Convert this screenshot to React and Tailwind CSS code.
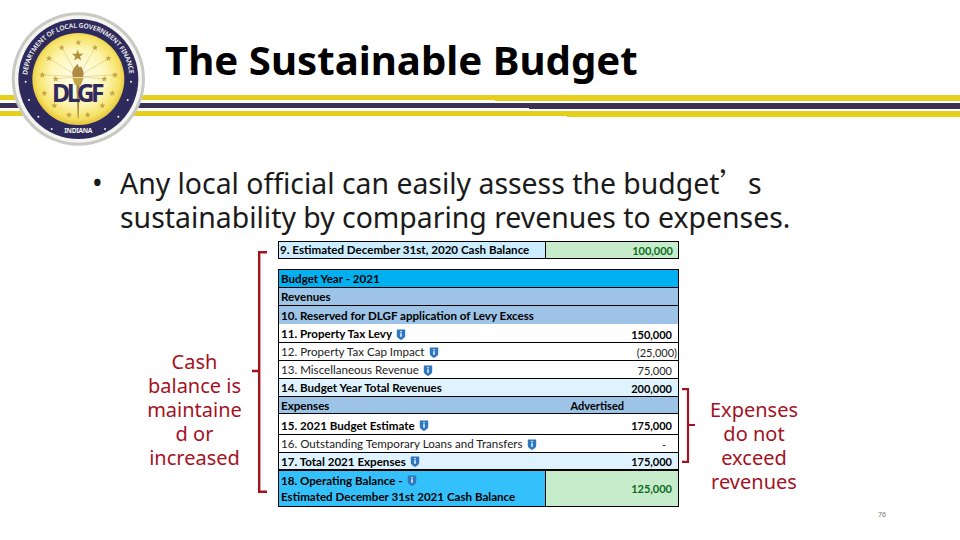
import React from "react";

// five pointed star, centred on cx/cy (seal coordinates)
function Star({ cx, cy, r, fill = "#c4a64a" }) {
  const pts = [];
  for (let i = 0; i < 10; i++) {
    const rad = i % 2 === 0 ? r : r * 0.42;
    const a = (Math.PI / 5) * i - Math.PI / 2;
    pts.push(`${cx + rad * Math.cos(a)},${cy + rad * Math.sin(a)}`);
  }
  return <polygon points={pts.join(" ")} fill={fill} />;
}

const stars = [
  [170, 128], [270, 128], [220, 113], [132, 160], [310, 160], [112, 210], [330, 210],
  [152, 222], [298, 222], [118, 265], [322, 265], [148, 302], [292, 302], [192, 330], [248, 330],
];

const rays = [
  [132, 160], [310, 160], [112, 210], [330, 210], [170, 128], [270, 128], [152, 222], [298, 222],
];

const dots = [
  [62, 230], [72, 285], [100, 335], [140, 372], [300, 372], [340, 335], [368, 285], [378, 230],
];

function Seal() {
  return (
    <svg viewBox="0 0 435 435" className="absolute left-[5px] top-[5px] z-10 h-[145px] w-[145px]">
      <defs>
        <radialGradient id="gold" cx="50%" cy="48%" r="50%">
          <stop offset="0%" stopColor="#fffef4" />
          <stop offset="60%" stopColor="#fdf6b8" />
          <stop offset="90%" stopColor="#f6e264" />
          <stop offset="100%" stopColor="#e8cc48" />
        </radialGradient>
        <path id="sealTop" d="M 66.5 222 A 153.5 153.5 0 0 1 373.5 222" />
      </defs>
      <circle cx="220" cy="222" r="200" fill="#c9c9c4" />
      <circle cx="220" cy="222" r="191" fill="#f4f4f0" />
      <circle cx="220" cy="222" r="180" fill="#2f2a5c" />
      <circle cx="220" cy="222" r="138" fill="url(#gold)" />
      {rays.map(([x, y]) => (
        <line key={`${x}-${y}`} x1="220" y1="215" x2={x} y2={y} stroke="#d6bc62" strokeWidth="1.5" />
      ))}
      {stars.map(([x, y]) => (
        <Star key={`${x}-${y}`} cx={x} cy={y} r={10} />
      ))}
      <Star cx={218} cy={152} r={18} fill="#b0913a" />
      {/* torch */}
      <path d="M218 176 C206 190 198 196 204 216 L234 216 C240 198 230 192 228 182 C226 190 222 188 218 176Z" fill="#b08c40" />
      <path d="M202 218 L236 218 L228 240 L210 240Z" fill="#c4a64a" />
      <path d="M214 240 L224 240 L221 340 L218 340Z" fill="#b08c40" />
      <text x="220" y="290" textAnchor="middle" className="font-['Noto_Sans'] text-[74px] font-bold" fill="#2f2a5c" textLength="158">
        DLGF
      </text>
      <text className="font-['Noto_Sans'] text-[20px] font-semibold" fill="#f4f4f0">
        <textPath href="#sealTop" textLength="455" startOffset="12">
          DEPARTMENT OF LOCAL GOVERNMENT FINANCE
        </textPath>
      </text>
      <text className="font-['Noto_Sans'] text-[20px] font-bold" fill="#f4f4f0" x="220" y="384" textAnchor="middle" textLength="84">
        INDIANA
      </text>
      {dots.map(([x, y]) => (
        <circle key={`${x}-${y}`} cx={x} cy={y} r="3" fill="#f4f4f0" />
      ))}
    </svg>
  );
}

function Stripe({ color, split }) {
  return (
    <div className="flex h-[6px] items-start">
      <div className={`h-[5px] ${split} ${color}`} />
      <div className={`h-[6px] flex-1 ${color}`} />
    </div>
  );
}

function InfoIcon() {
  return (
    <svg viewBox="0 0 9 11" className="ml-[4px] inline-block h-[11px] w-[10px] shrink-0">
      <path d="M0.3 0.6 H8.7 V7 C8.7 9 6 10 4.5 10.9 C3 10 0.3 9 0.3 7Z" fill="#2f78bf" />
      <rect x="3.8" y="2" width="1.4" height="1.4" fill="#ffffff" />
      <rect x="3.8" y="4.2" width="1.4" height="3.6" fill="#ffffff" />
    </svg>
  );
}

function Row({ h, bg = "bg-white", bold, icon, label, value, valueClass = "pr-[6px]", middle, last, textClass = "pt-[1px]" }) {
  return (
    <div className={`flex items-center pl-[2px] ${textClass} ${h} ${bg} ${bold ? "font-bold" : "text-[#222]"} ${last ? "" : "border-b border-black"}`}>
      <span className="flex items-center whitespace-nowrap text-[11.6px]">
        {label}
        {icon && <InfoIcon />}
      </span>
      {middle && <span className="ml-auto mr-[54px]">{middle}</span>}
      {value && <span className={`ml-auto ${valueClass}`}>{value}</span>}
    </div>
  );
}

export default function App() {
  return (
    <div className="relative h-[540px] w-[960px] overflow-hidden bg-white font-['Noto_Sans','Open_Sans',sans-serif]">
      <Seal />
      <div className="h-[95px] pl-[165px] pt-[33px]">
        <h1 className="text-[40.2px] font-bold leading-[53px] text-black">The Sustainable Budget</h1>
      </div>
      <div className="flex flex-col gap-[2px]">
        <Stripe color="bg-[#e6cf1a]" split="w-[495px]" />
        <Stripe color="bg-[#3a3054]" split="w-[529px]" />
        <Stripe color="bg-[#e6cf1a]" split="w-[567px]" />
      </div>

      <div className="mt-[48px] flex pl-[92px] text-[28.4px] leading-[34px] text-[#1a1a1a]">
        <span className="w-[28px]">•</span>
        <p className="w-[720px]">
          Any local official can easily assess the budget
          <span className="font-['Noto_Sans_CJK_SC',sans-serif]">’</span>s
          <br />
          sustainability by comparing revenues to expenses.
        </p>
      </div>

      <div className="mt-[7px] flex items-start pl-[147px]">
        <p className="mt-[109px] w-[95px] text-center text-[20px] leading-[24px] text-[#a3121f]">
          Cash
          <br />
          balance is
          <br />
          maintaine
          <br />d or
          <br />
          increased
        </p>

        <svg viewBox="0 0 16 242" className="ml-[10px] mt-[10px] h-[242px] w-[16px]">
          <path d="M15 1.2 H7.2 V240.8 H15 M7 120 H0" fill="none" stroke="#a3121f" strokeWidth="2.4" />
        </svg>

        <div className="ml-[10px] w-[401px] font-['Lato',sans-serif] text-[11px] leading-none text-black">
          <div className="flex h-[18px] border border-black font-bold">
            <div className="flex w-[267px] items-center border-r border-black bg-[#ccecff] pl-[1px] text-[11.6px]">
              9. Estimated December 31st, 2020 Cash Balance
            </div>
            <div className="flex flex-1 items-center justify-end bg-[#c6eccb] pr-[5px] text-[#0b6b1c]">100,000</div>
          </div>

          <div className="mt-[10px] border border-black">
            <Row h="h-[18px]" bg="bg-[#00b0f0]" bold label="Budget Year - 2021" />
            <Row h="h-[18px]" bg="bg-[#9dc3e6]" bold label="Revenues" />
            <Row h="h-[18px]" bg="bg-[#9dc3e6]" bold label="10. Reserved for DLGF application of Levy Excess" last />
            <Row h="h-[19px]" bold icon label="11. Property Tax Levy" value="150,000" textClass="pt-[2px]" />
            <Row h="h-[18px]" icon label="12. Property Tax Cap Impact" value="(25,000)" valueClass="pr-[1px]" />
            <Row h="h-[18px]" icon label="13. Miscellaneous Revenue" value="75,000" />
            <Row h="h-[18px]" bg="bg-[#dff3fe]" bold label="14. Budget Year Total Revenues" value="200,000" />
            <Row h="h-[17px]" bg="bg-[#9dc3e6]" bold label="Expenses" middle="Advertised" />
            <Row h="h-[21px]" bold icon label="15. 2021 Budget Estimate" value="175,000" textClass="pt-[3px]" />
            <Row h="h-[18px]" icon label="16. Outstanding Temporary Loans and Transfers" value="-" valueClass="pr-[12px]" />
            <div className="border-b-2 border-black">
              <Row h="h-[16px]" bg="bg-[#dff3fe]" bold icon label="17. Total 2021 Expenses" value="175,000" last />
            </div>
            <div className="flex h-[35px] font-bold">
              <div className="flex w-[267px] flex-col justify-center gap-[4px] border-r border-black bg-[#33c0fb] pl-[2px] text-[11.6px]">
                <span className="flex items-center">
                  18. Operating Balance -
                  <InfoIcon />
                </span>
                <span>Estimated December 31st 2021 Cash Balance</span>
              </div>
              <div className="flex flex-1 items-center justify-end bg-[#c6eccb] pr-[6px] text-[#0b6b1c]">125,000</div>
            </div>
          </div>
        </div>

        <svg viewBox="0 0 13 75" className="ml-[3px] mt-[147px] h-[75px] w-[13px]">
          <path d="M0 1.2 H6 V73.8 H0 M6 37 H13" fill="none" stroke="#a3121f" strokeWidth="2.2" />
        </svg>

        <p className="ml-[9px] mt-[157px] w-[100px] text-center text-[20px] leading-[24px] text-[#a3121f]">
          Expenses
          <br />
          do not
          <br />
          exceed
          <br />
          revenues
        </p>
      </div>

      <span className="absolute left-[878px] top-[510px] text-[7px] text-[#777]">76</span>
    </div>
  );
}
